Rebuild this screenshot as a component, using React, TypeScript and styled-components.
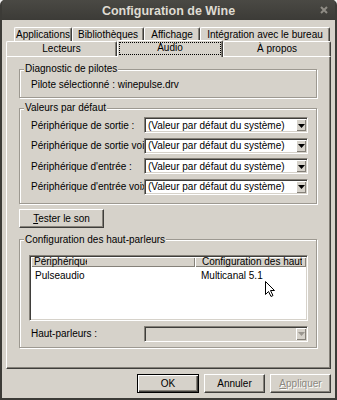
import React from 'react'
import styled, { createGlobalStyle } from 'styled-components'

const FACE = '#d6d2ca'
const SHADOW = '#858179'
const DARK = '#3f3e3b'

const GlobalStyle = createGlobalStyle`
  html, body {
    margin: 0;
    padding: 0;
    background: #f2f1f0;
  }
  body {
    font-family: "Liberation Sans", Arial, sans-serif;
    font-size: 10px;
    color: #000;
  }
`

const Window = styled.div`
  position: relative;
  width: 337px;
  height: 400px;
  box-sizing: border-box;
  display: flex;
  flex-direction: column;
  padding: 0 2px 2px 2px;
  background: #3c3b37;
  border-radius: 5px 5px 0 0;
  overflow: hidden;
`

const TitleBar = styled.div`
  flex: none;
  height: 20px;
  display: grid;
  grid-template-columns: 1fr auto 1fr;
  align-items: center;
  background: linear-gradient(#4a4944, #3c3b37);
  color: #dfdbd2;
  font: bold 12.5px "Liberation Sans", Arial, sans-serif;
`

const Title = styled.div`
  grid-column: 2;
  padding-top: 1px;
`

const CloseBox = styled.div`
  grid-column: 3;
  justify-self: end;
  margin-right: 7px;
  display: flex;
`

const Client = styled.div`
  flex: 1;
  display: flex;
  flex-direction: column;
  padding: 7px 4px 5px 4px;
  background: ${FACE};
`

const TabStrip = styled.div`
  display: flex;
  flex-direction: column;
`

const TabRow = styled.div<{ $h: number; $indent: number }>`
  display: flex;
  align-items: flex-start;
  height: ${(p) => p.$h}px;
  padding-left: ${(p) => p.$indent}px;
`

const Tab = styled.div<{ $w: number; $h: number; $selected?: boolean }>`
  position: relative;
  box-sizing: border-box;
  flex: none;
  width: ${(p) => p.$w}px;
  height: ${(p) => (p.$selected ? p.$h + 2 : p.$h)}px;
  margin-top: ${(p) => (p.$selected ? -1 : 0)}px;
  z-index: ${(p) => (p.$selected ? 2 : 0)};
  display: flex;
  align-items: center;
  justify-content: center;
  padding-bottom: ${(p) => (p.$selected ? 3 : 1)}px;
  background: ${FACE};
  border-top: 1px solid #fff;
  border-left: 1px solid #fff;
  border-right: 1px solid ${DARK};
  border-radius: 2px 2px 0 0;
  box-shadow: inset -1px 0 ${SHADOW};
  white-space: nowrap;

  ${(p) =>
    p.$selected &&
    `
    &::after {
      content: '';
      position: absolute;
      left: 1px;
      right: 1px;
      top: 1px;
      bottom: 2px;
      border: 1px dotted #000;
    }
  `}
`

const Panel = styled.div`
  flex: 1;
  display: flex;
  flex-direction: column;
  padding: 0 13px 0 12px;
  border-top: 1px solid #fff;
  border-left: 1px solid #fff;
  border-right: 1px solid ${DARK};
  border-bottom: 1px solid ${DARK};
  box-shadow: inset -1px -1px ${SHADOW};
`

const GroupBox = styled.fieldset<{ $mt: number }>`
  margin: ${(p) => p.$mt}px 0 0 0;
  padding: 0;
  min-width: 0;
  border: 1px solid #9d9991;
  box-shadow: 1px 1px 0 #fff, inset 1px 1px 0 #fff;
`

const Legend = styled.legend`
  margin-left: 4px;
  padding: 0 1px;
  line-height: 10px;
  background: ${FACE};
`

const GroupBody = styled.div<{ $pad: string }>`
  padding: ${(p) => p.$pad};
`

const Line = styled.div`
  line-height: 12px;
  white-space: nowrap;
`

const FormGrid = styled.div`
  display: grid;
  grid-template-columns: 113px 1fr;
  row-gap: 4.5px;
  align-items: center;
`

const FieldLabel = styled.div`
  overflow: hidden;
  white-space: nowrap;
  line-height: 15px;
`

const Combo = styled.div<{ $disabled?: boolean }>`
  box-sizing: border-box;
  height: 16px;
  display: flex;
  align-items: center;
  padding: 1px 1px 1px 3px;
  border: 1px solid;
  border-color: ${SHADOW} #fff #fff ${SHADOW};
  box-shadow: inset 1px 1px ${DARK}, inset -1px -1px ${FACE};
  background: ${(p) => (p.$disabled ? FACE : '#fff')};
`

const ComboText = styled.span`
  flex: 1;
  white-space: nowrap;
  overflow: hidden;
`

const ComboButton = styled.div<{ $disabled?: boolean }>`
  box-sizing: border-box;
  width: 10px;
  height: 12px;
  display: flex;
  align-items: center;
  justify-content: center;
  background: ${FACE};
  border-top: 1px solid #fff;
  border-left: 1px solid #fff;
  box-shadow: inset -1px -1px ${SHADOW};
  color: ${(p) => (p.$disabled ? '#9a968f' : '#000')};
`

const Button = styled.button<{ $w: number; $default?: boolean }>`
  box-sizing: border-box;
  width: ${(p) => p.$w}px;
  height: 19px;
  padding: 0;
  margin: 0;
  font: 10px "Liberation Sans", Arial, sans-serif;
  color: #000;
  background: ${FACE};
  border: 1px solid;
  border-color: ${(p) => (p.$default ? '#000' : `#fff ${DARK} ${DARK} #fff`)};
  box-shadow: ${(p) =>
    p.$default
      ? `inset 1px 1px #fff, inset -1px -1px ${DARK}, inset -2px -2px ${SHADOW}`
      : `inset -1px -1px ${SHADOW}`};
  &:disabled {
    color: #8c8880;
    text-shadow: 1px 1px #fff;
  }
`

const TestRow = styled.div`
  display: flex;
  margin-top: 5px;
`

const ListView = styled.div`
  box-sizing: border-box;
  height: 66px;
  border: 1px solid;
  border-color: ${SHADOW} #fff #fff ${SHADOW};
  box-shadow: inset 1px 1px ${DARK}, inset -1px -1px ${FACE};
  background: #fff;
  padding: 1px;
`

const ListHeader = styled.div`
  display: grid;
  grid-template-columns: 164px 1fr;
  height: 10px;
  background: ${FACE};
`

const HeaderCell = styled.div<{ $pl: number }>`
  box-sizing: border-box;
  padding-left: ${(p) => p.$pl}px;
  line-height: 10px;
  box-shadow: inset 1px 1px #fff, inset -1px -1px ${SHADOW};
  overflow: hidden;
`

const HeaderText = styled.span<{ $clip: number }>`
  display: block;
  max-width: ${(p) => p.$clip}px;
  overflow: hidden;
  white-space: nowrap;
  line-height: 10px;
`

const ListRow = styled.div`
  display: grid;
  grid-template-columns: 164px 1fr;
  height: 14px;
  line-height: 14px;
  padding-top: 2px;
`

const ListCell = styled.div<{ $pl: number }>`
  padding-left: ${(p) => p.$pl}px;
  white-space: nowrap;
`

const SpeakerGrid = styled(FormGrid)`
  grid-template-columns: 115px 1fr;
  margin-top: 5px;
`

const SpeakerLabel = styled(FieldLabel)`
  padding-left: 2px;
`

const Footer = styled.div`
  display: flex;
  justify-content: flex-end;
  gap: 5px;
  margin-top: 5px;
`

const Cursor = styled.svg`
  position: absolute;
  left: 265px;
  top: 281px;
`

function Arrow() {
  return (
    <svg width="7" height="4" viewBox="0 0 7 4">
      <path d="M0 0 H7 L3.5 4 Z" fill="currentColor" />
    </svg>
  )
}

function ComboBox({ value, disabled }: { value?: string; disabled?: boolean }) {
  return (
    <Combo $disabled={disabled}>
      <ComboText>{value}</ComboText>
      <ComboButton $disabled={disabled}>
        <Arrow />
      </ComboButton>
    </Combo>
  )
}

const devices = [
  'Périphérique de sortie :',
  'Périphérique de sortie voix :',
  "Périphérique d'entrée :",
  "Périphérique d'entrée voix :",
]

export default function App() {
  return (
    <>
      <GlobalStyle />
      <Window>
        <TitleBar>
          <Title>Configuration de Wine</Title>
          <CloseBox>
            <svg width="8" height="8" viewBox="0 0 8 8">
              <path d="M1 1 L7 7 M7 1 L1 7" stroke="#8f8c85" strokeWidth="2" />
            </svg>
          </CloseBox>
        </TitleBar>
        <Client>
          <TabStrip>
            <TabRow $h={14} $indent={8}>
              <Tab $w={58} $h={14}>Applications</Tab>
              <Tab $w={72} $h={14}>Bibliothèques</Tab>
              <Tab $w={56} $h={14}>Affichage</Tab>
              <Tab $w={130} $h={14}>Intégration avec le bureau</Tab>
            </TabRow>
            <TabRow $h={15} $indent={0}>
              <Tab $w={111} $h={15}>Lecteurs</Tab>
              <Tab $w={106} $h={15} $selected>
                Audio
              </Tab>
              <Tab $w={108} $h={15}>À propos</Tab>
            </TabRow>
          </TabStrip>
          <Panel>
            <GroupBox $mt={7}>
              <Legend>Diagnostic de pilotes</Legend>
              <GroupBody $pad="5px 11px 6px">
                <Line>Pilote sélectionné : winepulse.drv</Line>
              </GroupBody>
            </GroupBox>

            <GroupBox $mt={5}>
              <Legend>Valeurs par défaut</Legend>
              <GroupBody $pad="4px 8px 8px 11px">
                <FormGrid>
                  {devices.map((d) => (
                    <React.Fragment key={d}>
                      <FieldLabel>{d}</FieldLabel>
                      <ComboBox value="(Valeur par défaut du système)" />
                    </React.Fragment>
                  ))}
                </FormGrid>
              </GroupBody>
            </GroupBox>

            <TestRow>
              <Button $w={85}>
                <u>T</u>ester le son
              </Button>
            </TestRow>

            <GroupBox $mt={7}>
              <Legend>Configuration des haut-parleurs</Legend>
              <GroupBody $pad="10px 8px 5px 9px">
                <ListView>
                  <ListHeader>
                    <HeaderCell $pl={3}>
                      <HeaderText $clip={53}>Périphérique</HeaderText>
                    </HeaderCell>
                    <HeaderCell $pl={7}>
                      <HeaderText $clip={100}>Configuration des haut-parleurs</HeaderText>
                    </HeaderCell>
                  </ListHeader>
                  <ListRow>
                    <ListCell $pl={4}>Pulseaudio</ListCell>
                    <ListCell $pl={6}>Multicanal 5.1</ListCell>
                  </ListRow>
                </ListView>
                <SpeakerGrid>
                  <SpeakerLabel>Haut-parleurs :</SpeakerLabel>
                  <ComboBox disabled />
                </SpeakerGrid>
              </GroupBody>
            </GroupBox>
          </Panel>
          <Footer>
            <Button $w={62} $default>
              OK
            </Button>
            <Button $w={61}>Annuler</Button>
            <Button $w={61} disabled>
              <u>A</u>ppliquer
            </Button>
          </Footer>
        </Client>
        <Cursor width="12" height="17" viewBox="0 0 12 17">
          <path
            d="M0.5 0.5 V13.5 L3.5 10.5 L6 15.5 L8 14.5 L5.5 9.5 H9.5 Z"
            fill="#fff"
            stroke="#000"
            strokeWidth="1"
            strokeLinejoin="miter"
          />
        </Cursor>
      </Window>
    </>
  )
}
